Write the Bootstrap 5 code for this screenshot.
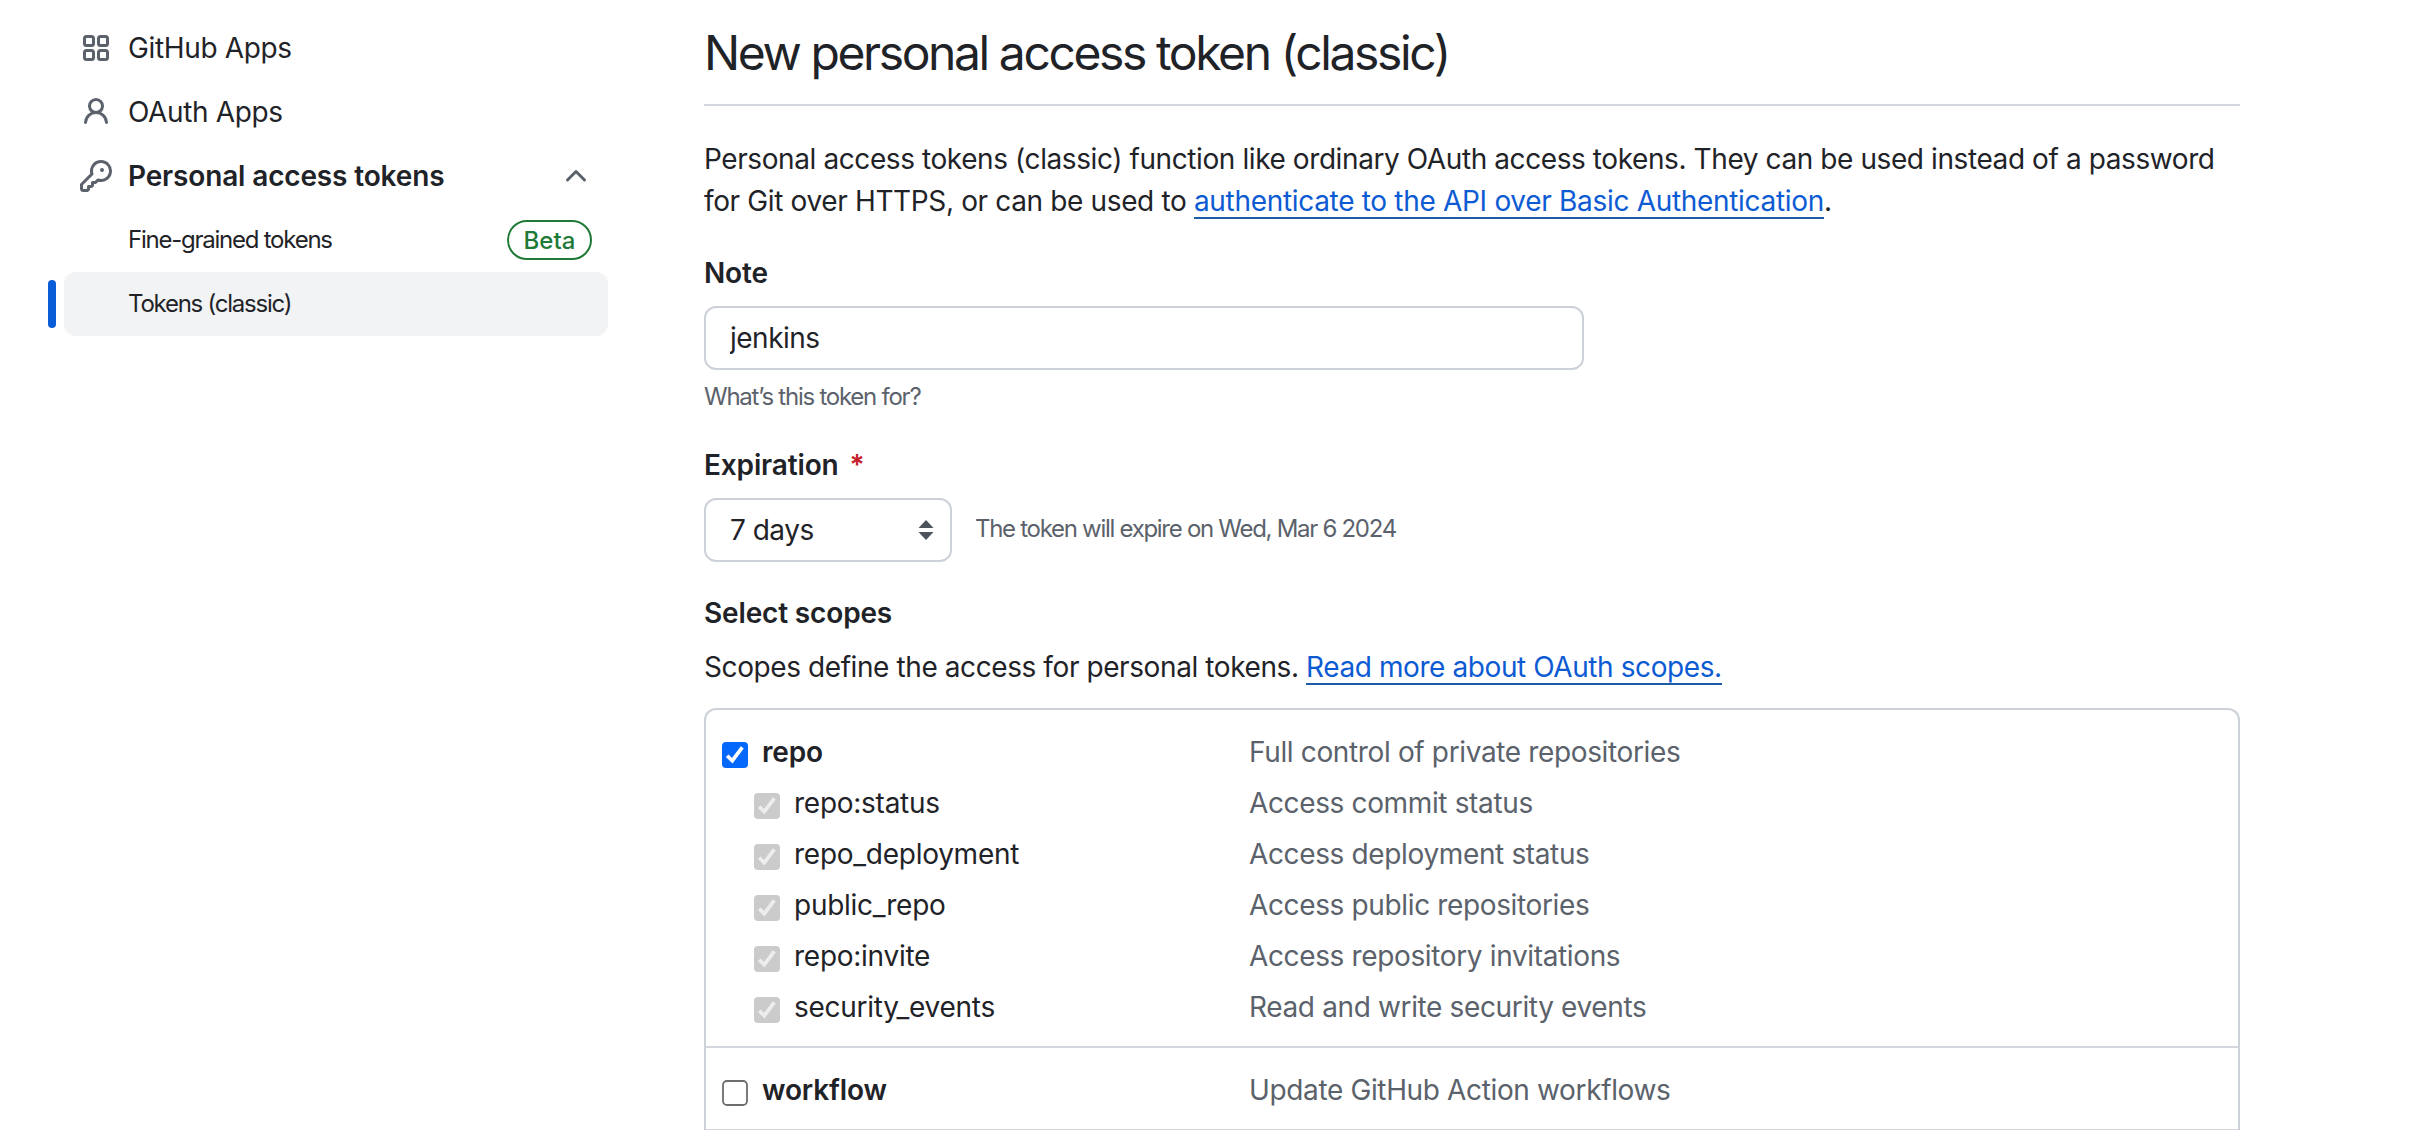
<!DOCTYPE html>
<html lang="en">
<head>
<meta charset="utf-8">
<meta name="viewport" content="width=device-width, initial-scale=1">
<title>New personal access token (classic)</title>
<link href="https://cdn.jsdelivr.net/npm/bootstrap@5.3.0/dist/css/bootstrap.min.css" rel="stylesheet">
<style>
  body { font-family: Inter, "Liberation Sans", sans-serif; font-size: 28px; line-height: 42px; letter-spacing: -.36px; color: #1f2328; background: #fff; height: 1130px; overflow: hidden; }
  .fg-muted { color: #5b626b; }
  .text-sm24 { font-size: 24px; letter-spacing: -1.24px; }
  .heavy { font-weight: 600; letter-spacing: -.15px; }
  .octicon { width: 32px; height: 32px; fill: #5b626b; flex: none; }

  /* Sidebar */
  .side { width: 608px; padding: 16px 0 0 64px; flex: none; }
  .side .nav-link { height: 64px; padding: 0 16px; color: inherit; border-radius: 12px; display: flex; align-items: center; gap: 16px; }
  .side .sub-link { padding-left: 64px; }
  .side .current { background: #f2f3f5; }
  .side .current::before { content: ""; position: absolute; left: -16px; top: 8px; width: 8px; height: 48px; border-radius: 4px; background: #0b5cd7; }
  .beta-pill { width: 85px; height: 40px; border: 2px solid #1f7a37; border-radius: 20px; color: #1f7a37; font-size: 24px; font-weight: 500; line-height: 37px; letter-spacing: 0; text-align: center; }

  /* Form column */
  .main-col { width: 1536px; margin-left: 96px; flex: none; }
  .page-title { font-size: 48px; font-weight: 400; line-height: 72px; letter-spacing: -2.4px; height: 106px; padding-top: 17px; margin: 0 0 32px; border-bottom: 2px solid #d3d7dd; }
  .intro { white-space: nowrap; margin-bottom: 30px; }
  .intro-lead { letter-spacing: -.41px; }
  .doc-link { color: #0d5bd3; text-decoration: none; background: linear-gradient(#1d5da8, #1d5da8) 0 100% / 100% 2px no-repeat; padding-bottom: 1px; }
  .intro .doc-link { letter-spacing: -.31px; }
  .scope-lead { letter-spacing: -.41px; margin-top: 12px; }
  .field-label { display: block; }
  .field { border: 2px solid #cdd1d8; border-radius: 12px; height: 64px; padding: 0 24px; margin-top: 12px; font-size: 28px; line-height: 60px; letter-spacing: -.5px; color: #1f2328; }
  .field:focus { box-shadow: none; }
  .note-field { width: 880px; }
  .pick-field { width: 248px; padding-right: 16px; }
  .hint { margin: 6px 0 26px; }
  .expiry { letter-spacing: -1.29px; margin: 10px 0 0 -1px; }
  .star { color: #c6202c; }
  .scope-title { margin-top: 30px; }

  /* Scope list, cut off by the bottom of the window */
  .scope-box { border: 2px solid #cdd1d8; border-bottom: 0; border-radius: 12px 12px 0 0; height: 422px; margin-top: 20px; overflow: hidden; }
  .scope-group { padding: 17px 16px 13px; border-bottom: 2px solid #d3d7dd; }
  .scope-row { height: 51px; line-height: 51px; }
  .scope-name { width: 527px; gap: 14px; flex: none; }
  .scope-name:not(.heavy) { letter-spacing: -.26px; }
  .scope-name.child { padding-left: 32px; }
  .tick { width: 26px; height: 26px; flex: none; position: relative; top: 2px; }
</style>
</head>
<body>
<svg class="d-none">
  <symbol id="check" viewBox="0 0 26 26"><rect width="26" height="26" rx="4" fill="currentColor"/><path d="M5.200 13.700 10.300 18.700 20.300 5.300" fill="none" stroke="var(--mark)" stroke-width="3.700"/></symbol>
</svg>
<div class="d-flex">
  <aside class="side">
    <nav class="nav flex-column">
      <a class="nav-link" href="#"><svg class="octicon" viewBox="0 0 16 16"><g fill="none" stroke="#5b626b" stroke-width="1.5"><rect x="2.25" y="2.25" width="4.5" height="4.5" rx="1"/><rect x="9.25" y="2.25" width="4.5" height="4.5" rx="1"/><rect x="2.25" y="9.25" width="4.5" height="4.5" rx="1"/><rect x="9.25" y="9.25" width="4.5" height="4.5" rx="1"/></g></svg><span>GitHub Apps</span></a>
      <a class="nav-link" href="#"><svg class="octicon" viewBox="0 0 16 16"><path d="M10.561 8.073a6.005 6.005 0 0 1 3.432 5.142.75.75 0 1 1-1.498.07 4.5 4.5 0 0 0-8.99 0 .75.75 0 0 1-1.498-.07 6.004 6.004 0 0 1 3.431-5.142 3.999 3.999 0 1 1 5.123 0ZM10.5 5a2.5 2.5 0 1 0-5 0 2.5 2.5 0 0 0 5 0Z"/></svg><span>OAuth Apps</span></a>
      <a class="nav-link heavy" href="#"><svg class="octicon" viewBox="0 0 16 16"><path d="M10.5 0a5.499 5.499 0 1 1-1.288 10.848l-.932.932a.749.749 0 0 1-.53.22H7v.75a.749.749 0 0 1-.22.53l-.5.5a.749.749 0 0 1-.53.22H5v.75a.749.749 0 0 1-.22.53l-.5.5a.749.749 0 0 1-.53.22h-2A1.75 1.75 0 0 1 0 14.25v-2c0-.199.079-.389.22-.53l4.932-4.932A5.5 5.5 0 0 1 10.5 0Zm-4 5.5c-.001.431.069.86.205 1.269a.75.75 0 0 1-.181.768L1.5 12.56v1.69c0 .138.112.25.25.25h1.69l.06-.06v-1.19a.75.75 0 0 1 .75-.75h1.19l.06-.06v-1.19a.75.75 0 0 1 .75-.75h1.19l1.023-1.025a.75.75 0 0 1 .768-.18A4 4 0 1 0 6.5 5.5ZM11 6a1 1 0 1 1 0-2 1 1 0 0 1 0 2Z"/></svg><span>Personal access tokens</span><svg class="octicon ms-auto" viewBox="0 0 16 16"><path d="M3.22 10.53a.749.749 0 0 1 0-1.06l4.25-4.25a.749.749 0 0 1 1.06 0l4.25 4.25a.749.749 0 1 1-1.06 1.06L8 6.811 4.28 10.53a.749.749 0 0 1-1.06 0Z"/></svg></a>
      <a class="nav-link sub-link text-sm24" href="#"><span>Fine-grained tokens</span><span class="beta-pill ms-auto">Beta</span></a>
      <a class="nav-link sub-link text-sm24 current position-relative" href="#"><span>Tokens (classic)</span></a>
    </nav>
  </aside>

  <main class="main-col">
    <h1 class="page-title">New personal access token (classic)</h1>
    <p class="intro"><span class="intro-lead">Personal access tokens (classic) function like ordinary OAuth access tokens. They can be used instead of a password</span><br>for Git over HTTPS, or can be used to <a class="doc-link" href="#">authenticate to the API over Basic Authentication</a>.</p>

    <label class="heavy field-label" for="note">Note</label>
    <input class="form-control field note-field" id="note" type="text" value="jenkins">
    <div class="fg-muted text-sm24 hint">What’s this token for?</div>

    <div class="heavy field-label">Expiration <span class="star ms-1">*</span></div>
    <div class="d-flex align-items-center gap-4">
      <div class="field pick-field d-flex align-items-center justify-content-between"><span>7 days</span><svg width="16" height="22" viewBox="0 0 16 22" fill="#4d535c"><path d="M8 1 15.500 9H.5ZM8 21 .5 13h15Z"/></svg></div>
      <span class="fg-muted text-sm24 expiry">The token will expire on Wed, Mar 6 2024</span>
    </div>

    <div class="heavy scope-title">Select scopes</div>
    <div class="scope-lead">Scopes define the access for personal tokens. <a class="doc-link" href="#">Read more about OAuth scopes.</a></div>

    <div class="scope-box">
      <div class="scope-group">
        <div class="scope-row d-flex"><div class="scope-name d-flex align-items-center heavy"><svg class="tick" style="color:#0568fd;--mark:#fff"><use href="#check"/></svg>repo</div><div class="fg-muted">Full control of private repositories</div></div>
        <div class="scope-row d-flex"><div class="scope-name child d-flex align-items-center"><svg class="tick" style="color:#cbcbcb;--mark:#ededed"><use href="#check"/></svg>repo:status</div><div class="fg-muted">Access commit status</div></div>
        <div class="scope-row d-flex"><div class="scope-name child d-flex align-items-center"><svg class="tick" style="color:#cbcbcb;--mark:#ededed"><use href="#check"/></svg>repo_deployment</div><div class="fg-muted">Access deployment status</div></div>
        <div class="scope-row d-flex"><div class="scope-name child d-flex align-items-center"><svg class="tick" style="color:#cbcbcb;--mark:#ededed"><use href="#check"/></svg>public_repo</div><div class="fg-muted">Access public repositories</div></div>
        <div class="scope-row d-flex"><div class="scope-name child d-flex align-items-center"><svg class="tick" style="color:#cbcbcb;--mark:#ededed"><use href="#check"/></svg>repo:invite</div><div class="fg-muted">Access repository invitations</div></div>
        <div class="scope-row d-flex"><div class="scope-name child d-flex align-items-center"><svg class="tick" style="color:#cbcbcb;--mark:#ededed"><use href="#check"/></svg>security_events</div><div class="fg-muted">Read and write security events</div></div>
      </div>
      <div class="scope-group">
        <div class="scope-row d-flex"><div class="scope-name d-flex align-items-center heavy"><svg class="tick" viewBox="0 0 26 26"><rect x="1" y="1" width="24" height="24" rx="4" fill="#fff" stroke="#6d6d6d" stroke-width="1.800"/></svg>workflow</div><div class="fg-muted">Update GitHub Action workflows</div></div>
      </div>
    </div>
  </main>
</div>
</body>
</html>
